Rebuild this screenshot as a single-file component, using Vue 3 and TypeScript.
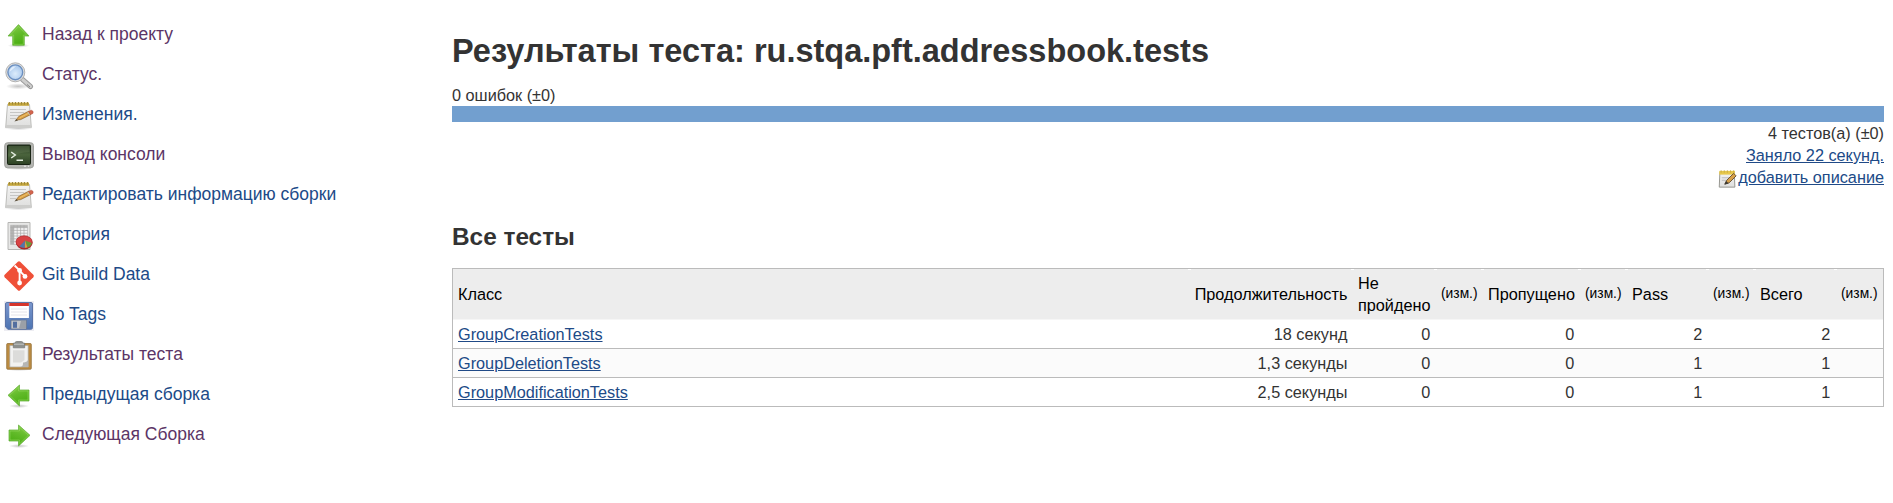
<script setup lang="ts">
type IconName = 'up' | 'search' | 'notepad' | 'terminal' | 'graph' | 'git' | 'save' | 'clipboard' | 'prev' | 'next'

interface Task {
  icon: IconName
  label: string
  visited?: boolean
}

interface TestRow {
  name: string
  duration: string
  fail: number
  skip: number
  pass: number
  total: number
}

const tasks: Task[] = [
  { icon: 'up', label: 'Назад к проекту', visited: true },
  { icon: 'search', label: 'Статус.', visited: true },
  { icon: 'notepad', label: 'Изменения.' },
  { icon: 'terminal', label: 'Вывод консоли', visited: true },
  { icon: 'notepad', label: 'Редактировать информацию сборки' },
  { icon: 'graph', label: 'История' },
  { icon: 'git', label: 'Git Build Data' },
  { icon: 'save', label: 'No Tags' },
  { icon: 'clipboard', label: 'Результаты теста', visited: true },
  { icon: 'prev', label: 'Предыдущая сборка' },
  { icon: 'next', label: 'Следующая Сборка', visited: true },
]

const rows: TestRow[] = [
  { name: 'GroupCreationTests', duration: '18 секунд', fail: 0, skip: 0, pass: 2, total: 2 },
  { name: 'GroupDeletionTests', duration: '1,3 секунды', fail: 0, skip: 0, pass: 1, total: 1 },
  { name: 'GroupModificationTests', duration: '2,5 секунды', fail: 0, skip: 0, pass: 1, total: 1 },
]
</script>

<template>
  <svg class="defs" width="0" height="0" aria-hidden="true">
    <defs>
      <linearGradient id="green" x1="0" y1="0" x2="0.4" y2="1">
        <stop offset="0" stop-color="#8fd04f" />
        <stop offset="0.55" stop-color="#62bb2a" />
        <stop offset="1" stop-color="#4cae14" />
      </linearGradient>
      <linearGradient id="paper" x1="0" y1="0" x2="0" y2="1">
        <stop offset="0" stop-color="#f4f4f3" />
        <stop offset="1" stop-color="#dfdfde" />
      </linearGradient>
      <linearGradient id="screen" x1="0" y1="0" x2="0" y2="1">
        <stop offset="0" stop-color="#26371f" />
        <stop offset="0.5" stop-color="#4a643c" />
        <stop offset="1" stop-color="#2c4023" />
      </linearGradient>
      <linearGradient id="floppy" x1="0" y1="0" x2="0" y2="1">
        <stop offset="0" stop-color="#7b97cd" />
        <stop offset="1" stop-color="#4d74b2" />
      </linearGradient>
      <radialGradient id="lens" cx="0.5" cy="0.6" r="0.6">
        <stop offset="0" stop-color="#dcecfb" />
        <stop offset="1" stop-color="#a6c6ec" />
      </radialGradient>
      <radialGradient id="shade">
        <stop offset="0" stop-color="#555" stop-opacity="0.35" />
        <stop offset="1" stop-color="#555" stop-opacity="0" />
      </radialGradient>
      <symbol id="notepad" viewBox="0 0 30 30">
        <ellipse cx="14.5" cy="27.2" rx="14.5" ry="2" fill="url(#shade)" />
        <path d="M3.5 3.5H25.5L27.3 26.5H1.7Z" fill="url(#paper)" stroke="#b5b5b2" stroke-width=".9" />
        <path d="M2.2 24H27V27H1.6Z" fill="#cdcdcb" />
        <path d="M4 1.6H25V4.8H4Z" fill="#c4a63c" />
        <path d="M5.5 1V3.6M8.5 1V3.6M11.5 1V3.6M14.5 1V3.6M17.5 1V3.6M20.5 1V3.6M23.5 1V3.6" stroke="#9c873c" stroke-width="1" />
        <path d="M6 8.5H22M6 11.5H20M6 14.5H15M6 17.5H12" stroke="#c6c6c4" stroke-width="1" />
        <path d="M12 19L15 15.2 24.8 10.2 26.7 13.5 16.6 18.6Z" fill="#dca145" stroke="#8f672e" stroke-width=".8" />
        <path d="M15.5 16.9L25 12" stroke="#f0c674" stroke-width=".8" />
        <path d="M24.6 10.4L27.4 9.3Q30 10.2 28.9 12.4L26.5 13.5Z" fill="#d4654e" stroke="#b45444" stroke-width=".6" />
        <path d="M23.7 10.9L25.6 13.8" stroke="#bcbcbc" stroke-width="1" />
        <path d="M10.4 20.6L12.4 17.9 14 19.5Z" fill="#5c513f" />
      </symbol>
    </defs>
  </svg>

  <div class="page">
    <nav class="side">
      <a v-for="task in tasks" :key="task.label" class="task" :class="{ visited: task.visited }">
        <svg class="icon" viewBox="0 0 30 30">
          <template v-if="task.icon === 'up'">
            <ellipse cx="14.5" cy="24.6" rx="11" ry="2.2" fill="url(#shade)" />
            <path d="M14.5 3.6L25 15H20.3V24.3H8.7V15H4Z" fill="url(#green)" stroke="#6db544" stroke-width=".8" stroke-linejoin="round" />
            <path d="M14.5 5.4L22.7 14.1H19.3V23.3H9.7V14.1H6.3Z" fill="none" stroke="#9bdc66" stroke-width=".5" />
          </template>
          <template v-else-if="task.icon === 'search'">
            <ellipse cx="14" cy="25.3" rx="12" ry="3" fill="url(#shade)" />
            <path d="M18.5 18.5L26.5 25.5" stroke="#9c9c9c" stroke-width="5" stroke-linecap="round" />
            <path d="M18.5 18.5L26.5 25.5" stroke="#cececd" stroke-width="3" stroke-linecap="round" />
            <path d="M23 23.5L26 26" stroke="#858585" />
            <circle cx="11.3" cy="11.3" r="9.5" fill="#e0e0df" stroke="#aaa" stroke-width=".9" />
            <circle cx="11.3" cy="11.3" r="7.4" fill="url(#lens)" stroke="#6b8fc0" stroke-width="1.4" />
            <path d="M5.5 11Q6 5 12 5.2Q9 8 5.5 11Z" fill="#edf5ff" opacity=".75" />
          </template>
          <use v-else-if="task.icon === 'notepad'" href="#notepad" />
          <template v-else-if="task.icon === 'terminal'">
            <ellipse cx="15" cy="27" rx="14" ry="2" fill="url(#shade)" />
            <rect x=".7" y="1.7" width="28.8" height="25.2" rx="3" fill="#b4b5b1" stroke="#a0a19d" />
            <rect x="3.5" y="4" width="23" height="19.5" rx="1" fill="url(#screen)" stroke="#192414" />
            <path d="M4.5 5H25.5V11Q15 11.5 4.5 16Z" fill="#6b805d" opacity=".35" />
            <path d="M7.2 11L11.3 14 7.2 17M12.5 19.3H19" fill="none" stroke="#e4ede0" stroke-width="1.5" />
            <path d="M20 25.2H22M24 25.2H25" stroke="#eee" />
          </template>
          <template v-else-if="task.icon === 'graph'">
            <path d="M4 1.5H26V28.5H4Z" fill="#e7e7e6" stroke="#b6b6b4" />
            <path d="M6.5 4.3H23.5V23.5H6.5Z" fill="#f4f4f4" stroke="#bbb" stroke-width=".7" />
            <path d="M6.5 4.3H23.5V6.6H9.8V23.5H6.5Z" fill="#b4b4b3" />
            <path d="M9.8 4.3V23.5M13.2 4.3V23.5M16.6 4.3V23.5M20 4.3V23.5M6.5 6.6H23.5M6.5 9.4H23.5M6.5 12.2H23.5M6.5 15H23.5M6.5 17.8H23.5M6.5 20.6H23.5" stroke="#aaa" stroke-width=".7" />
            <ellipse cx="20.3" cy="21.8" rx="8.3" ry="6.6" fill="#a92528" />
            <ellipse cx="20.1" cy="20.9" rx="8.1" ry="6.1" fill="#d84445" stroke="#b52c30" stroke-width=".7" />
            <path d="M21 19.5L27.9 22Q26.5 26 23.4 26.4Z" fill="#669b3b" />
            <path d="M21 19.5L23.4 26.6 20.7 27Z" fill="#d8a341" />
            <path d="M21 19.5L20.7 27Q17.7 27 15.4 25.6Z" fill="#5176aa" />
          </template>
          <template v-else-if="task.icon === 'git'">
            <path d="M13.8.7Q15 -.3 16.2.7L29.3 13.8Q30.3 15 29.3 16.2L16.2 29.3Q15 30.3 13.8 29.3L.7 16.2Q-.3 15 .7 13.8Z" fill="#ef5038" />
            <path d="M10.6 4.5L15.6 9.3V22M15.6 9.7L21 15.4" fill="none" stroke="#fff" stroke-width="1.9" />
            <circle cx="15.6" cy="9.5" r="2.4" fill="#fff" />
            <circle cx="21" cy="15.4" r="2.4" fill="#fff" />
            <circle cx="15.6" cy="22" r="2.4" fill="#fff" />
          </template>
          <template v-else-if="task.icon === 'save'">
            <rect x="0" y="0" width="30" height="30" fill="#ededf2" />
            <path d="M2.8 1.5H27Q28.5 1.5 28.5 3V26.6Q28.5 28.3 26.8 28.3H4L1.5 26V3Q1.5 1.5 2.8 1.5Z" fill="url(#floppy)" stroke="#5b74a7" />
            <rect x="5.3" y="2" width="19.6" height="15" fill="#fff" />
            <rect x="5.3" y="2" width="19.6" height="3" fill="#d5342b" />
            <path d="M7 8H23M7 11H23M7 14H23" stroke="#dddde5" stroke-width=".8" />
            <path d="M7 19.2H22.5V28H7Z" fill="#c3c6ca" stroke="#5e6d86" stroke-width=".7" />
            <path d="M9 20.7H13V26.8H9Z" fill="#536f9f" />
            <path d="M17 20H22V27.5H15Z" fill="#9ba0a7" />
          </template>
          <template v-else-if="task.icon === 'clipboard'">
            <ellipse cx="15" cy="28.2" rx="14" ry="1.8" fill="url(#shade)" />
            <rect x="2.7" y="2.5" width="24.6" height="25.7" rx="1" fill="#bd8c42" stroke="#94713b" stroke-width=".8" />
            <path d="M5.8 4.5H24.2V26H5.8Z" fill="#f2f2f1" stroke="#a9a79f" stroke-width=".7" />
            <path d="M9 9.2H20.5V19L17 21.5H9Z" fill="#dcdcda" />
            <path d="M24.2 19V26H16.3Q19.3 25.4 19 21.4Q22.5 21.9 24.2 19Z" fill="#b6b6b4" />
            <path d="M11 2.2Q11 .5 12.5.5H17.5Q19 .5 19 2.2H20.7V6.8H9.3V2.2Z" fill="#8e918e" stroke="#737673" stroke-width=".7" />
            <path d="M10 3.2H20" stroke="#c5c7c5" />
          </template>
          <template v-else>
            <ellipse cx="15" cy="25" rx="10" ry="2" fill="url(#shade)" />
            <g :class="{ flip: task.icon === 'next' }">
              <path d="M4 14.3L15.5 4V9H25V20H15.5V25Z" fill="url(#green)" stroke="#6db544" stroke-width=".8" stroke-linejoin="round" />
              <path d="M5.6 14.3L14.5 6.2V10H24V19H14.5V22.8Z" fill="none" stroke="#9bdc66" stroke-width=".5" />
            </g>
          </template>
        </svg>
        <span>{{ task.label }}</span>
      </a>
    </nav>

    <main class="main">
      <h1><span>Результаты теста: ru.stqa.pft.addressbook.tests</span></h1>
      <div class="failures">0 ошибок (±0)</div>
      <div class="bar"></div>
      <div class="summary">
        <div>4 тестов(а) (±0)</div>
        <div><a class="link">Заняло 22 секунд.</a></div>
        <div class="describe">
          <svg class="edit" viewBox="0 0 32 30">
            <path d="M3 4H26L27 28H2Z" fill="url(#paper)" stroke="#92928c" stroke-width="1.5" />
            <path d="M2 2H27V8H2Z" fill="#e7c84b" />
            <path d="M5 1V5M10 1V5M15 1V5M20 1V5M25 1V5" stroke="#c4a846" stroke-width="1.3" />
            <path d="M6 13H18M6 17H14" stroke="#bbb" stroke-width="1.5" />
            <path d="M11 23L14 17 25 6 29 10 18 21Z" fill="#d8a047" stroke="#655032" stroke-width="1.5" />
            <path d="M10 24L13 18 17 22Z" fill="#3d3a34" />
          </svg>
          <a class="link">добавить описание</a>
        </div>
      </div>

      <h2><span>Все тесты</span></h2>
      <div class="table">
        <div class="row head">
          <span>Класс</span>
          <span class="right">Продолжительность</span>
          <span>Не пройдено</span>
          <span class="diff">(изм.)</span>
          <span>Пропущено</span>
          <span class="diff">(изм.)</span>
          <span>Pass</span>
          <span class="diff">(изм.)</span>
          <span>Всего</span>
          <span class="diff">(изм.)</span>
        </div>
        <div v-for="row in rows" :key="row.name" class="row">
          <span><a class="link">{{ row.name }}</a></span>
          <span class="right">{{ row.duration }}</span>
          <span class="right">{{ row.fail }}</span>
          <span></span>
          <span class="right">{{ row.skip }}</span>
          <span></span>
          <span class="right">{{ row.pass }}</span>
          <span></span>
          <span class="right">{{ row.total }}</span>
          <span></span>
        </div>
      </div>
    </main>
  </div>
</template>

<style>
body {
  margin: 0;
  background: #fff;
}
</style>

<style scoped>
.defs {
  display: block;
}
.page {
  display: flex;
  box-sizing: border-box;
  width: 1893px;
  height: 503px;
  overflow: hidden;
  font: 16.25px/22px "Liberation Sans", Arial, sans-serif;
  color: #333;
}
.side {
  width: 452px;
  flex: none;
  padding: 16px 0 0 4px;
  box-sizing: border-box;
}
.task {
  display: flex;
  align-items: flex-start;
  gap: 8px;
  height: 40px;
  font-size: 17.5px;
  line-height: 36px;
  color: #204a87;
  white-space: nowrap;
}
.task.visited {
  color: #5c3566;
}
.icon {
  display: block;
  width: 30px;
  height: 30px;
  margin-top: 5px;
}
.flip {
  transform: translateX(30px) scaleX(-1);
}
.main {
  width: 1432px;
}
h1,
h2 {
  box-sizing: border-box;
  margin: 0;
  font-weight: bold;
  white-space: nowrap;
}
h1 {
  padding-top: 31px;
  height: 84px;
  font-size: 32.5px;
  line-height: 41px;
}
.failures {
  height: 22px;
}
.bar {
  height: 16px;
  background: #729fcf;
}
.summary {
  height: 66px;
  text-align: right;
}
.describe {
  display: flex;
  justify-content: flex-end;
}
.edit {
  width: 20px;
  height: 20px;
  margin-top: 3px;
}
.link {
  color: #204a87;
  text-decoration: underline;
}
h2 {
  padding-top: 34px;
  height: 80px;
  font-size: 24.375px;
  line-height: 29px;
}
.table {
  border: 1px solid #bbb;
  border-bottom: 0;
}
.row {
  display: grid;
  grid-template-columns: 737px 163px 83px 47px 97px 47px 81px 47px 81px 47px;
  box-sizing: border-box;
  height: 29px;
  border-bottom: 1px solid #bbb;
  line-height: 29px;
}
.row:nth-child(odd) {
  background: #fbfbfb;
}
.row:nth-child(even) {
  background: #fff;
}
.row > span {
  padding: 0 5px;
  white-space: nowrap;
}
.row .right {
  padding-right: 5.6px;
  text-align: right;
}
.row.head {
  height: 51px;
  border-bottom: 1px solid #f6f6f6;
  background: #ededed;
  color: #000;
  line-height: 22px;
}
.row.head > span {
  position: relative;
  display: flex;
  align-items: center;
}
.row.head > .right {
  justify-content: flex-end;
}
/* Small notch where two header cells meet the top border */
.row.head > span + span::before {
  content: "";
  position: absolute;
  top: 0;
  left: -2px;
  width: 3px;
  height: 1px;
  background: #fff;
}
.row.head > span:nth-child(3) {
  white-space: normal;
}
.row.head .diff {
  font-size: 13.8px;
  padding-right: 0;
}
</style>
